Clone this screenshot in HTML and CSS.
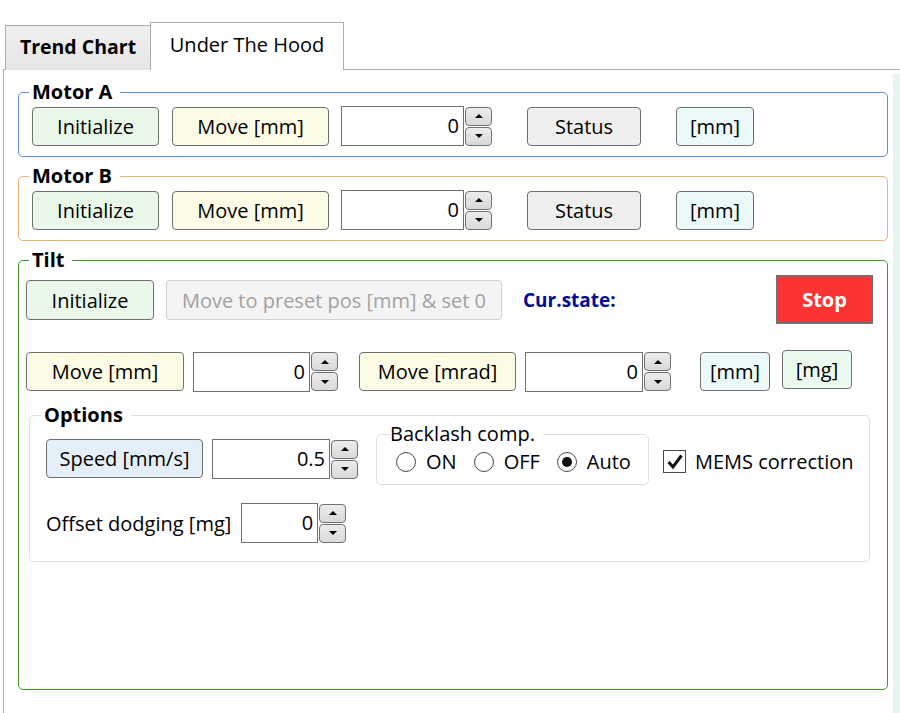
FILE: index.html
```html
<!DOCTYPE html>
<html>
<head>
<meta charset="utf-8">
<link rel="stylesheet" href="styles.css">
</head>
<body>
<div class="tabs">
  <div class="tab tab-inactive">Trend Chart</div>
  <div class="tab tab-active">Under The Hood</div>
</div>
<div class="panel">
  <div class="content">
    <fieldset class="group group-a">
      <legend>Motor A</legend>
      <div class="row">
        <button class="btn btn-green w-init">Initialize</button>
        <button class="btn btn-yellow w-move ml-13">Move [mm]</button>
        <div class="num ml-12"><span class="num-box w-num">0</span><span class="spin"><span class="spin-btn"><i class="up"></i></span><span class="spin-btn"><i class="down"></i></span></span></div>
        <button class="btn btn-grey w-status ml-35">Status</button>
        <button class="btn btn-cyan w-unit ml-35">[mm]</button>
      </div>
    </fieldset>
    <fieldset class="group group-b">
      <legend>Motor B</legend>
      <div class="row">
        <button class="btn btn-green w-init">Initialize</button>
        <button class="btn btn-yellow w-move ml-13">Move [mm]</button>
        <div class="num ml-12"><span class="num-box w-num">0</span><span class="spin"><span class="spin-btn"><i class="up"></i></span><span class="spin-btn"><i class="down"></i></span></span></div>
        <button class="btn btn-grey w-status ml-35">Status</button>
        <button class="btn btn-cyan w-unit ml-35">[mm]</button>
      </div>
    </fieldset>
    <fieldset class="group group-tilt">
      <legend>Tilt</legend>
      <div class="row tilt-row1">
        <button class="btn btn-green w-tinit">Initialize</button>
        <button class="btn btn-disabled w-preset ml-12">Move to preset pos [mm] &amp; set 0</button>
        <span class="cur-state">Cur.state:</span>
        <button class="btn-stop">Stop</button>
      </div>
      <div class="row tilt-row2">
        <button class="btn btn-yellow w-tmove">Move [mm]</button>
        <div class="num ml-9"><span class="num-box w-tnum1">0</span><span class="spin"><span class="spin-btn"><i class="up"></i></span><span class="spin-btn"><i class="down"></i></span></span></div>
        <button class="btn btn-yellow w-mrad ml-21">Move [mrad]</button>
        <div class="num ml-9"><span class="num-box w-tnum">0</span><span class="spin"><span class="spin-btn"><i class="up"></i></span><span class="spin-btn"><i class="down"></i></span></span></div>
        <button class="btn btn-cyan w-small ml-29">[mm]</button>
        <button class="btn btn-mint w-small ml-12 raise">[mg]</button>
      </div>
      <fieldset class="options">
        <legend>Options</legend>
        <div class="opt-row1">
          <button class="btn btn-blue w-speed">Speed [mm/s]</button>
          <div class="num ml-9"><span class="num-box w-tnum">0.5</span><span class="spin"><span class="spin-btn"><i class="up"></i></span><span class="spin-btn"><i class="down"></i></span></span></div>
          <fieldset class="backlash">
            <legend>Backlash comp.</legend>
            <div class="radios">
              <label class="radio"><span class="circle"></span>ON</label>
              <label class="radio"><span class="circle"></span>OFF</label>
              <label class="radio"><span class="circle checked"></span>Auto</label>
            </div>
          </fieldset>
          <label class="check"><span class="box"><svg width="18" height="18" viewBox="0 0 18 18"><path d="M2.5 9 L7 14 L15.5 2.5" fill="none" stroke="#111" stroke-width="3"/></svg></span>MEMS correction</label>
        </div>
        <div class="opt-row2">
          <span class="label">Offset dodging [mg]</span>
          <div class="num ml-10"><span class="num-box w-onum">0</span><span class="spin"><span class="spin-btn"><i class="up"></i></span><span class="spin-btn"><i class="down"></i></span></span></div>
        </div>
      </fieldset>
    </fieldset>
  </div>
  <div class="strip"></div>
</div>
</body>
</html>
```
FILE: styles.css
```css
* { box-sizing: border-box; }
html, body { margin: 0; padding: 0; background: #fff; }
body {
  width: 900px;
  height: 713px;
  overflow: hidden;
  font-family: "Open Sans", "Noto Sans", sans-serif;
  font-size: 20px;
  color: #000;
}
.tabs {
  display: flex;
  align-items: flex-end;
  padding: 22px 0 0 5px;
  height: 70px;
}
.tab {
  border: 1px solid #acacac;
  border-bottom: none;
  display: flex;
  align-items: center;
  justify-content: center;
}
.tab-inactive {
  width: 146px;
  height: 45px;
  background: linear-gradient(#f0f0f0, #e5e5e5);
  font-weight: bold;
  font-size: 19.5px;
  padding-bottom: 3px;
}
.tab-active {
  width: 194px;
  height: 48px;
  margin-left: -1px;
  background: #fff;
  padding-bottom: 4px;
}
.panel {
  display: flex;
  margin-left: 3px;
  margin-top: -1px;
  border-top: 1px solid #acacac;
  border-left: 1px solid #acacac;
  height: 644px;
}
.content {
  width: 889px;
  padding-left: 14px;
  padding-right: 5px;
}
.strip {
  flex: 1;
  margin-top: 4px;
  background: #e6f5ef;
}
.group {
  margin: 0;
  min-width: 0;
  border-radius: 5px;
  padding: 0 12px 10px 13px;
}
.group legend, .options legend {
  font-weight: bold;
  padding: 0 8px 0 3px;
  margin-left: -3px;
  line-height: 22px;
  font-size: 20px;
}
.group-a { margin-top: 11px; border: 1px solid #5b8cf0; }
.group-b { margin-top: 8px; border: 1px solid #f4b26a; }
.group-tilt {
  margin-top: 8px;
  border: 1px solid #3c9a1e;
  height: 441px;
  padding-left: 7px;
}
.group-tilt > legend { margin-left: 3px; }
.row { display: flex; align-items: center; margin-top: 3px; }
.btn {
  font-family: inherit;
  font-size: 20px;
  height: 39px;
  border: 1px solid #707070;
  border-radius: 4px;
  padding: 0;
  color: #000;
  white-space: nowrap;
}
.btn-green { background: #e9f8e9; }
.btn-yellow { background: #fcfbe6; }
.btn-grey { background: #efefef; }
.btn-cyan { background: #ebf9f8; }
.btn-mint { background: #ebfaee; }
.btn-blue { background: #e4eff9; }
.btn-disabled { background: #f4f4f4; color: #a2a2a2; border-color: #d0d0d0; }
.w-init { width: 127px; }
.w-move { width: 157px; }
.w-status { width: 114px; }
.w-unit { width: 78px; }
.w-tinit { width: 128px; height: 40px; }
.w-preset { width: 336px; height: 40px; }
.w-tmove { width: 158px; }
.w-mrad { width: 157px; }
.w-small { width: 70px; }
.w-speed { width: 157px; }
.ml-9 { margin-left: 9px; }
.ml-10 { margin-left: 10px; }
.ml-12 { margin-left: 12px; }
.ml-13 { margin-left: 13px; }
.ml-21 { margin-left: 21px; }
.ml-29 { margin-left: 29px; }
.ml-35 { margin-left: 35px; }
.raise { margin-bottom: 4px; }
.num { display: flex; align-items: center; }
.num-box {
  height: 40px;
  border: 1px solid #707070;
  background: #fff;
  text-align: right;
  padding-right: 4px;
  line-height: 38px;
}
.w-num { width: 123px; }
.w-tnum { width: 118px; }
.w-tnum1 { width: 117px; }
.w-onum { width: 77px; }
.spin {
  display: flex;
  flex-direction: column;
  margin-left: 1px;
  gap: 1px;
}
.spin-btn {
  width: 27px;
  height: 19px;
  border: 1px solid #707070;
  border-radius: 4px;
  background: linear-gradient(#ececec, #d9d9d9);
  display: flex;
  align-items: center;
  justify-content: center;
}
.spin-btn i { width: 0; height: 0; border-left: 4px solid transparent; border-right: 4px solid transparent; }
.spin-btn i.up { border-bottom: 4px solid #000; }
.spin-btn i.down { border-top: 4px solid #000; }
.tilt-row1 { margin-top: 4px; height: 49px; }
.tilt-row1 .btn { margin-top: 1px; }
.cur-state {
  margin-left: 21px;
  color: #000c96;
  font-weight: bold;
  font-size: 19px;
  margin-top: 0;
}
.btn-stop {
  margin-left: auto;
  margin-right: 2px;
  width: 97px;
  height: 49px;
  background: #fb3333;
  border: 2px solid #707070;
  color: #fff;
  font-family: inherit;
  font-weight: bold;
  font-size: 20px;
}
.tilt-row2 { margin-top: 26px; }
.options {
  margin: 11px 5px 0 3px;
  min-width: 0;
  border: 1px solid #dbe1e7;
  border-radius: 5px;
  padding: 0 10px 0 16px;
  height: 158px;
}
.options legend { margin-left: -5px; }
.opt-row1 { display: flex; align-items: flex-start; margin-top: 13px; }
.backlash {
  margin: -17px 0 0 18px;
  min-width: 0;
  width: 273px;
  height: 63px;
  border: 1px solid #dbe1e7;
  border-radius: 5px;
  padding: 0 8px 0 19px;
}
.backlash legend {
  font-weight: normal;
  padding: 0 8px 0 0;
  margin-left: -6px;
  line-height: 24px;
}
.radios { display: flex; align-items: center; margin-top: 2px; white-space: nowrap; }
.radio { display: flex; align-items: center; margin-right: 17px; }
.radio:last-child { margin-right: 0; }
.circle {
  width: 20px;
  height: 20px;
  border: 1px solid #4a4a4a;
  border-radius: 50%;
  margin-right: 10px;
  display: flex;
  align-items: center;
  justify-content: center;
}
.circle.checked::after {
  content: "";
  width: 10px;
  height: 10px;
  border-radius: 50%;
  background: #111;
}
.check {
  display: flex;
  align-items: center;
  margin-left: 14px;
  margin-top: 9px;
  white-space: nowrap;
}
.box {
  width: 23px;
  height: 23px;
  border: 1px solid #4a4a4a;
  margin-right: 9px;
  display: flex;
  align-items: center;
  justify-content: center;
}
.opt-row2 { display: flex; align-items: center; margin-top: 18px; }
```
